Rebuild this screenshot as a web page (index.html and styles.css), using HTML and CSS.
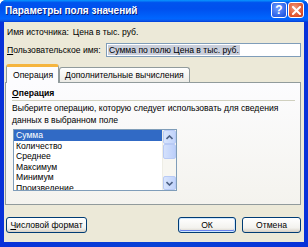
FILE: index.html
```html
<!DOCTYPE html>
<html>
<head>
<meta charset="utf-8">
<link rel="stylesheet" href="styles.css">
</head>
<body>
<div class="window">
  <div class="titlebar">
    <span class="title">Параметры поля значений</span>
    <div class="tbtns">
      <span class="tbtn help">?</span>
      <span class="tbtn close">
        <svg width="9" height="9" viewBox="0 0 9 9"><path d="M1 1 L8 8 M8 1 L1 8" stroke="#fff" stroke-width="2" stroke-linecap="square"/></svg>
      </span>
    </div>
  </div>
  <div class="body">
    <div class="row r1">
      <span class="lbl">Имя источника:</span>
      <span>Цена в тыс. руб.</span>
    </div>
    <div class="row r2">
      <span class="lbl2"><u>П</u>ользовательское имя:</span>
      <div class="input"><span class="sel">Сумма по полю Цена в тыс. руб.</span></div>
    </div>
    <div class="tabs">
      <div class="tab active">Операция</div>
      <div class="tab">Дополнительные вычисления</div>
    </div>
    <div class="panel">
      <div class="heading"><u>О</u>перация</div>
      <div class="sep"></div>
      <div class="desc">Выберите операцию, которую следует использовать для сведения<br>данных в выбранном поле</div>
      <div class="list">
        <div class="items">
          <div class="item on">Сумма</div>
          <div class="item">Количество</div>
          <div class="item">Среднее</div>
          <div class="item">Максимум</div>
          <div class="item">Минимум</div>
          <div class="item">Произведение</div>
        </div>
        <div class="sbar">
          <div class="sbtn"><svg width="7" height="5" viewBox="0 0 7 5"><path d="M0.5 4 L3.5 1 L6.5 4" fill="none" stroke="#4D6185" stroke-width="1.6"/></svg></div>
          <div class="thumb"></div>
          <div class="track"></div>
          <div class="sbtn"><svg width="7" height="5" viewBox="0 0 7 5"><path d="M0.5 1 L3.5 4 L6.5 1" fill="none" stroke="#4D6185" stroke-width="1.6"/></svg></div>
        </div>
      </div>
    </div>
    <div class="buttons">
      <div class="btn fmt"><u>Ч</u>исловой формат</div>
      <div class="spacer"></div>
      <div class="btn ok">ОК</div>
      <div class="btn cancel">Отмена</div>
    </div>
  </div>
</div>
</body>
</html>
```
FILE: styles.css
```css
* { box-sizing: border-box; }
html, body { margin: 0; padding: 0; }
body {
  width: 308px;
  height: 247px;
  overflow: hidden;
  font-family: "Liberation Sans", Arial, sans-serif;
  font-size: 8.6px;
  color: #000;
  background: #fff;
}
u { text-decoration: underline; text-underline-offset: 1px; }
.window {
  width: 308px;
  height: 247px;
  display: flex;
  flex-direction: column;
  background: linear-gradient(90deg, #0831D9, #0842D6 50%, #0831D9);
  border-radius: 6px 6px 0 0;
  overflow: hidden;
}
.titlebar {
  height: 22px;
  flex: none;
  display: flex;
  align-items: center;
  padding: 0 5px 2px 5px;
  background: linear-gradient(#0997ff 0%, #0053ee 12%, #0050ee 40%, #0066ff 85%, #0a5bf0 92%, #003dd7 100%);
}
.title {
  color: #fff;
  font-weight: bold;
  font-size: 10px;
  text-shadow: 1px 1px 0 #0a1e7a;
  flex: 1;
}
.tbtns { display: flex; gap: 1px; margin-right: -1px; }
.tbtn {
  width: 16px;
  height: 16px;
  border: 1px solid #fff;
  border-radius: 3px;
  display: flex;
  align-items: center;
  justify-content: center;
  color: #fff;
  font-weight: bold;
  font-size: 12px;
}
.help { background: radial-gradient(circle at 40% 35%, #6f9cff, #2b62e8 70%, #1a4bd0); }
.close { background: radial-gradient(circle at 40% 35%, #f29a7c, #e0552e 65%, #c13a1a); }
.body {
  flex: 1;
  margin: 0 4px 5px 4px;
  background: #ECE9D8;
  padding: 3px 0 0 0;
  display: flex;
  flex-direction: column;
}
.row { display: flex; align-items: center; padding-left: 3px; white-space: nowrap; }
.r1 { height: 14px; }
.lbl { flex: none; margin-right: 4px; }
.r2 { height: 14px; margin-top: 4px; }
.lbl2 { width: 99px; flex: none; }
.input {
  width: 195px;
  height: 14px;
  border: 1px solid #7F9DB9;
  background: #fff;
  padding: 1px 1px;
  display: flex;
  align-items: center;
}
.sel { background: #C9CEDB; padding: 0 1px; line-height: 10px; }
.tabs {
  display: flex;
  align-items: flex-end;
  margin: 7px 0 0 2px;
  height: 18px;
  position: relative;
  z-index: 1;
}
.tab {
  height: 15px;
  padding: 0 5px;
  border: 1px solid #919B9C;
  border-bottom: none;
  border-radius: 3px 3px 0 0;
  background: linear-gradient(#fff, #ECEBE6);
  display: flex;
  align-items: center;
}
.tab.active {
  width: 53px;
  background: #FCFCFE;
  border-top: 3px solid #F5B53F;
  margin-bottom: -1px;
  height: 19px;
  padding-left: 6px;
}
.panel {
  margin-left: 1px;
  width: 296px;
  height: 123px;
  border: 1px solid #919B9C;
  background: linear-gradient(#FCFCFE, #F4F3EE);
  padding: 0 0 0 6px;
}
.heading { font-weight: bold; line-height: 12px; margin-top: 4px; }
.sep { height: 1px; background: #D0D0BF; margin: 1px 5px 0 0; }
.desc { line-height: 12px; margin-top: 1px; }
.list {
  margin: 3px 0 0 1px;
  width: 164px;
  height: 62px;
  border: 1px solid #7F9DB9;
  background: #fff;
  display: flex;
  overflow: hidden;
}
.items { flex: 1; }
.item { height: 10.5px; line-height: 10.5px; padding-left: 2px; }
.item.on { background: #316AC5; color: #fff; }
.sbar {
  width: 14px;
  display: flex;
  flex-direction: column;
  background: #F7F6F1;
  border-left: 1px solid #EEEDE5;
}
.sbtn {
  height: 14px;
  border: 1px solid #B8CAF5;
  border-radius: 2px;
  background: linear-gradient(90deg, #D9E5FD, #C1D3FB);
  display: flex;
  align-items: center;
  justify-content: center;
}
.thumb {
  height: 15px;
  border: 1px solid #B8CAF5;
  border-radius: 2px;
  background: linear-gradient(90deg, #D4E1FC, #BCCFFA);
}
.track { flex: 1; }
.buttons {
  display: flex;
  margin-top: 12px;
  padding: 0 0 0 2px;
  gap: 6px;
}
.spacer { flex: 1; }
.btn {
  height: 16px;
  border: 1px solid #003C74;
  border-radius: 3px;
  background: linear-gradient(#FFFFFF, #F3F2EE 70%, #D6D0C5);
  display: flex;
  align-items: center;
  justify-content: center;
}
.fmt { width: 81px; }
.ok { width: 58px; box-shadow: inset 0 0 0 1px #CEE7FF, inset 0 -1px 0 1px #6982EE; }
.cancel { width: 59px; margin-right: 3px; }
```
